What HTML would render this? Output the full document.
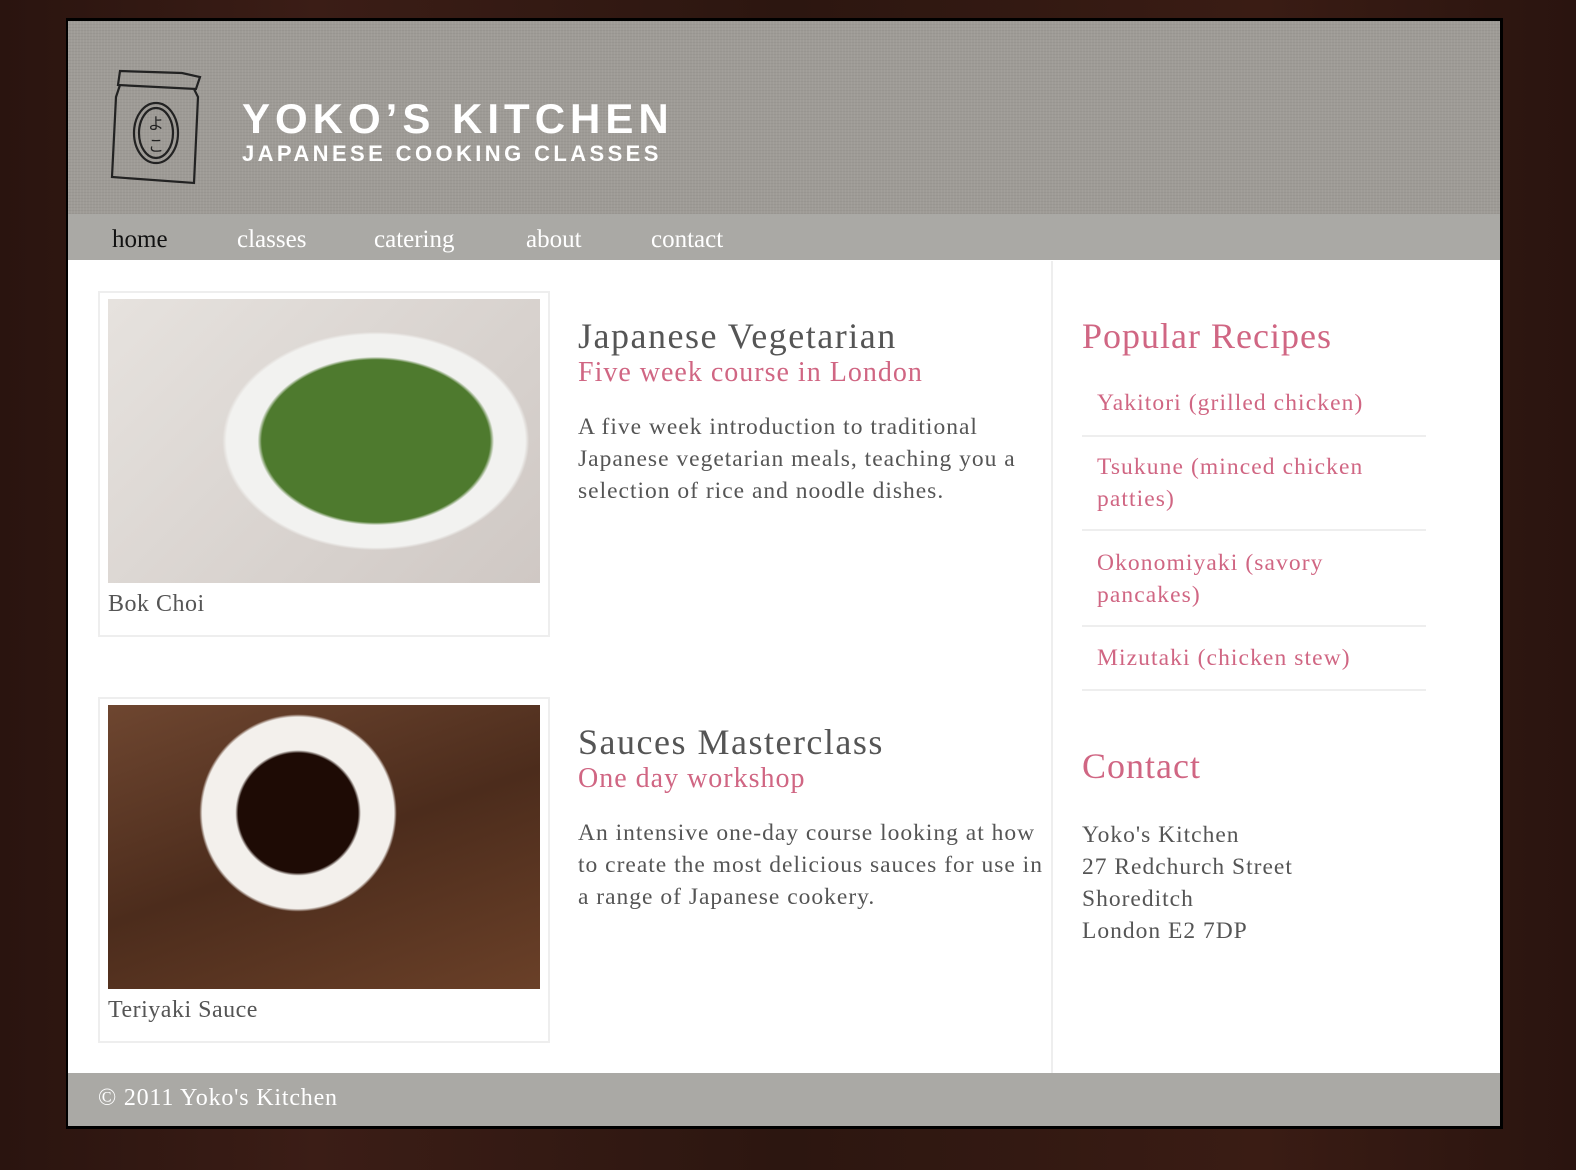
<!DOCTYPE html>
<html><head><meta charset="utf-8"><style>
*{margin:0;padding:0;box-sizing:border-box}
body{width:1576px;height:1170px;background:linear-gradient(90deg,#2a140f,#3b1d16 20%,#2c1610 50%,#3a1c14 80%,#2a140f);font-family:"Liberation Serif",Georgia,serif;position:relative;overflow:hidden}
.wrap{position:absolute;left:66px;top:18px;width:1437px;height:1111px;background:#000;padding:3px 3px 3px 2px}
.in{position:relative;width:1432px;height:1105px;background:#fff}
.hd{position:absolute;left:0;top:0;width:1432px;height:193px;background:#9e9b96;background-image:repeating-linear-gradient(90deg,rgba(255,255,255,.05) 0 1px,transparent 1px 3px),repeating-linear-gradient(0deg,rgba(0,0,0,.04) 0 1px,transparent 1px 3px)}
.t1{position:absolute;left:174px;top:74px;font:bold 42px "Liberation Sans",sans-serif;color:#fff;letter-spacing:5px}
.t2{position:absolute;left:174px;top:120px;font:bold 22px "Liberation Sans",sans-serif;color:#fff;letter-spacing:3.4px}
.nav{position:absolute;left:0;top:193px;width:1432px;height:46px;background:#aaa9a5;font-size:25px;color:#fff}
.nav span{position:absolute;top:12px}
.fig{position:absolute;left:30px;width:452px;height:346px;border:2px solid #eee}
.fig .im{position:absolute;left:8px;top:6px;width:432px;height:284px}
.fig .cap{position:absolute;left:8px;top:298px;font-size:24px;color:#555;letter-spacing:.5px}
h2{position:absolute;left:510px;font-weight:normal;font-size:36px;color:#555;letter-spacing:1.5px}
h3{position:absolute;left:510px;font-weight:normal;font-size:28px;color:#d06683;letter-spacing:1px}
p{position:absolute;left:510px;width:480px;font-size:23.5px;line-height:32px;color:#555;letter-spacing:1px}
.side{position:absolute;left:983px;top:240px;width:2px;height:812px;background:#eee}
.ph{position:absolute;left:1014px;font-size:36px;color:#d06683;letter-spacing:1px}
.li{position:absolute;left:1014px;width:344px;border-bottom:2px solid #eee;font-size:23.5px;line-height:32px;color:#d06683;padding-left:15px;letter-spacing:1.1px}
.ft{position:absolute;left:0;top:1052px;width:1432px;height:53px;background:#aaa9a5;color:#fff;font-size:24px;padding:12px 30px;letter-spacing:.8px}
</style></head><body>
<div class="wrap"><div class="in">
<div class="hd">
<svg style="position:absolute;left:40px;top:46px" width="95" height="120" viewBox="0 0 95 120" fill="none" stroke="#222" stroke-width="2.2"><path d="M12 4 L10 18 L88 22 L92 10 L74 6 Z M12 18 L8 30 L4 110 L86 116 L90 30 L86 22"/><ellipse cx="48" cy="66" rx="22" ry="30"/><ellipse cx="48" cy="66" rx="17" ry="25"/><text x="40" y="62" font-size="16" fill="#222" stroke="none" font-family="Noto Sans CJK JP,sans-serif">よ</text><text x="40" y="84" font-size="16" fill="#222" stroke="none" font-family="Noto Sans CJK JP,sans-serif">こ</text></svg>
<div class="t1">YOKO’S KITCHEN</div><div class="t2">JAPANESE COOKING CLASSES</div>
</div>
<div class="nav"><span style="left:44px;color:#111">home</span><span style="left:169px">classes</span><span style="left:306px">catering</span><span style="left:458px">about</span><span style="left:583px">contact</span></div>
<div class="fig" style="top:270px"><div class="im" style="background:radial-gradient(ellipse 48% 52% at 62% 50%,#4e7a2e 0 55%,#f2f2f0 57% 72%,transparent 74%),linear-gradient(135deg,#e6e2de,#cfc8c4)"></div><div class="cap">Bok Choi</div></div>
<h2 style="top:294px">Japanese Vegetarian</h2><h3 style="top:336px">Five week course in London</h3>
<p style="top:390px">A five week introduction to traditional Japanese vegetarian meals, teaching you a selection of rice and noodle dishes.</p>
<div class="fig" style="top:676px"><div class="im" style="background:radial-gradient(circle at 44% 38%,#1e0b05 0 20%,#f3f0ec 21% 32%,transparent 33%),linear-gradient(160deg,#6e4630,#4c2c1c 50%,#6a4028)"></div><div class="cap">Teriyaki Sauce</div></div>
<h2 style="top:700px">Sauces Masterclass</h2><h3 style="top:742px">One day workshop</h3>
<p style="top:796px">An intensive one-day course looking at how to create the most delicious sauces for use in a range of Japanese cookery.</p>
<div class="side"></div>
<div class="ph" style="top:294px">Popular Recipes</div>
<div class="li" style="top:366px;height:50px">Yakitori (grilled chicken)</div>
<div class="li" style="top:430px;height:80px">Tsukune (minced chicken patties)</div>
<div class="li" style="top:526px;height:80px">Okonomiyaki (savory pancakes)</div>
<div class="li" style="top:621px;height:49px">Mizutaki (chicken stew)</div>
<div class="ph" style="top:724px">Contact</div>
<p style="left:1014px;top:798px;width:300px">Yoko's Kitchen<br>27 Redchurch Street<br>Shoreditch<br>London E2 7DP</p>
<div class="ft">© 2011 Yoko's Kitchen</div>
</div></div>
</body></html>
